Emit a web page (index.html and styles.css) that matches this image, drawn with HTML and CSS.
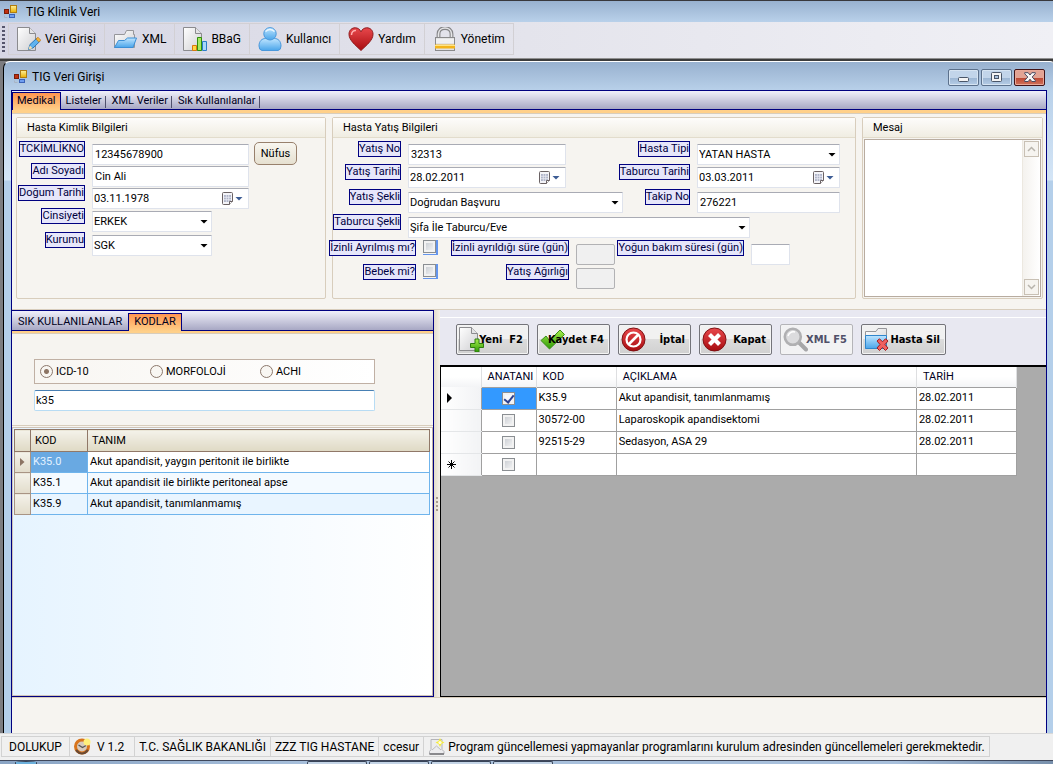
FILE: index.html
```html
<!DOCTYPE html>
<html lang="tr">
<head>
<meta charset="utf-8">
<title>TIG Klinik Veri</title>
<link rel="stylesheet" href="styles.css">
</head>
<body>
<svg class="defs" aria-hidden="true">
  <defs>
    <linearGradient id="paper" x1="0" y1="0" x2="1" y2="1"><stop offset="0" stop-color="#ffffff"/><stop offset="1" stop-color="#cfcfd2"/></linearGradient>
    <linearGradient id="blue" x1="0" y1="0" x2="0" y2="1"><stop offset="0" stop-color="#bfe5ff"/><stop offset="1" stop-color="#4aa5ea"/></linearGradient>
    <linearGradient id="red" x1="0" y1="0" x2="0" y2="1"><stop offset="0" stop-color="#e8484c"/><stop offset="1" stop-color="#a80c10"/></linearGradient>
    <linearGradient id="green" x1="0" y1="0" x2="0" y2="1"><stop offset="0" stop-color="#a6ee4c"/><stop offset="1" stop-color="#2f9a06"/></linearGradient>
    <linearGradient id="gold" x1="0" y1="0" x2="0" y2="1"><stop offset="0" stop-color="#fff09a"/><stop offset="1" stop-color="#eab000"/></linearGradient>
    <symbol id="app" viewBox="0 0 14 14">
      <rect x=".5" y="4.500" width="4" height="4" fill="#c03010" stroke="#7a1c08"/>
      <rect x="6.500" y=".5" width="6" height="7" fill="url(#gold)" stroke="#b07c10"/>
      <rect x="5.500" y="9.500" width="5" height="3" fill="#6f9ef0" stroke="#3a62b8"/>
      <path d="M.5 10.500v2h3" fill="none" stroke="#a8b4c4"/>
    </symbol>
    <symbol id="cal" viewBox="0 0 12 14">
      <path d="M.5 1.500q0-1 1-1h8q1 0 1 1v8l-3 3h-6q-1 0-1-1z" fill="#f4f4f8" stroke="#6a6264"/>
      <path d="M2 3h7v7H2z" fill="#aeb4c8"/>
      <path d="M4.300 3v7M6.700 3v7M2 5.300h7M2 7.700h7" stroke="#e8eaf2" stroke-width=".8"/>
      <path d="M10.500 9.500h-3v3" fill="#fff" stroke="#6a6264"/>
    </symbol>
    <symbol id="page" viewBox="0 0 19 24">
      <path d="M.5.5h12l6 6v17H.5z" fill="url(#paper)" stroke="#8b8b8e"/>
      <path d="M12.500.5v6h6" fill="#e4e4e6" stroke="#8b8b8e"/>
    </symbol>
  </defs>
</svg>

<header class="app-title"><svg class="app-icon"><use href="#app"/></svg><span>TIG Klinik Veri</span></header>

<nav class="toolbar">
  <span class="grip"></span>
  <button class="tool"><svg width="24" height="24" viewBox="0 0 24 24"><use href="#page" width="19" height="24"/><path d="M11.500 22.500l1.500-5 7-6.500 3 3.200-7 6.800z" fill="#5fb2ee" stroke="#2a76b8"/><path d="M19 12l2-1.800 2.800 3-2 1.800z" fill="#f3b53a" stroke="#c07a18" stroke-width=".7"/><path d="M11.500 22.500l1.300-4 2.800 2.700z" fill="#f6dfae"/></svg>Veri Girişi</button>
  <button class="tool"><svg width="25" height="24" viewBox="0 0 25 24"><path d="M1.500 20.500v-13h10l2-4h7v4h1v13z" fill="url(#paper)" stroke="#96969a"/><path d="M1.500 20.500l4-7h6l3-2.500h9l-3.500 9.500z" fill="url(#blue)" stroke="#3b8fd6"/></svg>XML</button>
  <button class="tool"><svg width="24" height="24" viewBox="0 0 24 24"><use href="#page" width="19" height="24"/><path d="M9.500 18.500h4v5h-4z" fill="#ffd740" stroke="#d8780c"/><path d="M14.500 10.500h4v13h-4z" fill="#a5e860" stroke="#2f8d0c"/><path d="M19.500 14.500h4v9h-4z" fill="#a8d8fa" stroke="#2a7cc8"/></svg>BBaG</button>
  <button class="tool"><svg width="24" height="24" viewBox="0 0 24 24"><path d="M1 19c0-5 3-7.500 6.500-7.500h9c3.500 0 6.500 2.500 6.500 7.500q0 4-3 4.500H4Q1 23 1 19z" fill="url(#blue)" stroke="#4a98dc"/><circle cx="12" cy="6.800" r="6.200" fill="url(#blue)" stroke="#4a98dc"/><path d="M7.500 4.500q4.500-4 9 0" stroke="#e8f6ff" fill="none" stroke-width="1.500"/></svg>Kullanıcı</button>
  <button class="tool"><svg width="26" height="24" viewBox="0 0 26 24"><path d="M13 23.500C8 18.500 1 13.500 1 7.200 1 3 4 .8 7.200.8 10 .8 12 2.500 13 4.800 14 2.500 16 .8 18.800.8 22 .8 25 3 25 7.200c0 6.300-7 11.300-12 16.300z" fill="url(#red)" stroke="#8f1a1c"/><path d="M3.500 8c0-3 2-4.800 4.500-4.500" stroke="#ffb0b0" fill="none" stroke-width="1.500"/></svg>Yardım</button>
  <button class="tool"><svg width="24" height="24" viewBox="0 0 24 24"><path d="M5.500 12V7c0-8 13-8 13 0v5" fill="none" stroke="#858588" stroke-width="3.800"/><path d="M5.500 12V7c0-8 13-8 13 0v5" fill="none" stroke="#e6e6e8" stroke-width="1.600"/><rect x="2.500" y="10.500" width="19" height="13" fill="#e2e2e4" stroke="#8a8a8c"/><path d="M3 13h18M3 15h18" stroke="#fff"/><path d="M2 17.500h20v4H2z" fill="#f3b41c"/><path d="M2 18.500h20" stroke="#ffe584"/></svg>Yönetim</button>
</nav>

<main class="mdi">
<section class="child">
  <header class="child-title">
    <svg class="app-icon"><use href="#app"/></svg><span>TIG Veri Girişi</span>
    <div class="win-buttons">
      <button class="wb" aria-label="Simge durumuna küçült"><svg width="12" height="11" viewBox="0 0 12 11"><rect x=".5" y="5.500" width="10" height="4" rx="1" fill="#f4f4f4" stroke="#4a5668"/></svg></button>
      <button class="wb" aria-label="Ekranı kapla"><svg width="12" height="11" viewBox="0 0 12 11"><rect x=".5" y=".5" width="10" height="9" rx="1" fill="#f4f4f4" stroke="#4a5668"/><rect x="3.500" y="3.500" width="4" height="3" fill="#a8c0dc" stroke="#4a5668"/></svg></button>
      <button class="wb close" aria-label="Pencereyi kapat"><svg width="12" height="11" viewBox="0 0 12 11"><path d="M.7.7h3.500L6 3 7.800.7h3.500v1L8.200 5l3.100 3.500v1H7.800L6 7.200 4.200 9.500H.7v-1L3.800 5 .7 1.700z" fill="#f6f6f6" stroke="#4a4a60"/></svg></button>
    </div>
  </header>

  <div class="client">
    <div class="tabs main-tabs" role="tablist">
      <button class="tab active" role="tab">Medikal</button><button class="tab" role="tab">Listeler</button><button class="tab" role="tab">XML Veriler</button><button class="tab" role="tab">Sık Kullanılanlar</button>
    </div>

    <div class="groups">
      <fieldset class="group">
        <div class="group-head">Hasta Kimlik Bilgileri</div>
        <div class="form id-form">
          <label class="lbl" for="tc">TCKİMLİKNO</label><input class="field" id="tc" value="12345678900"><button class="nufus">Nüfus</button>
          <label class="lbl" for="ad">Adı Soyadı</label><input class="field" id="ad" value="Cin Ali">
          <label class="lbl" for="dt">Doğum Tarihi</label><span class="combo date"><input class="field" id="dt" value="03.11.1978"><svg class="cal-icon"><use href="#cal"/></svg><i></i></span>
          <label class="lbl" for="cins">Cinsiyeti</label><span class="combo short"><select class="field" id="cins"><option>ERKEK</option></select><i></i></span>
          <label class="lbl" for="kur">Kurumu</label><span class="combo short"><select class="field" id="kur"><option>SGK</option></select><i></i></span>
        </div>
      </fieldset>

      <fieldset class="group">
        <div class="group-head">Hasta Yatış Bilgileri</div>
        <div class="form stay-form">
          <label class="lbl" for="yno">Yatış No</label><input class="field mid" id="yno" value="32313">
          <label class="lbl" for="tip">Hasta Tipi</label><span class="combo"><select class="field" id="tip"><option>YATAN HASTA</option></select><i></i></span>
          <label class="lbl" for="ytar">Yatış Tarihi</label><span class="combo date mid"><input class="field" id="ytar" value="28.02.2011"><svg class="cal-icon"><use href="#cal"/></svg><i></i></span>
          <label class="lbl" for="ttar">Taburcu Tarihi</label><span class="combo date"><input class="field" id="ttar" value="03.03.2011"><svg class="cal-icon"><use href="#cal"/></svg><i></i></span>
          <label class="lbl" for="ysek">Yatış Şekli</label><span class="combo"><select class="field" id="ysek"><option>Doğrudan Başvuru</option></select><i></i></span>
          <label class="lbl" for="takip">Takip No</label><input class="field" id="takip" value="276221">
          <label class="lbl" for="tsek">Taburcu Şekli</label><span class="combo wide"><select class="field" id="tsek"><option>Şifa İle Taburcu/Eve</option></select><i></i></span>
        </div>
        <div class="form extra-form">
          <label class="lbl" for="izin">İzinli Ayrılmış mı?</label><span class="check-box"><input type="checkbox" id="izin"></span>
          <label class="lbl" for="isure">İzinli ayrıldığı süre (gün)</label><input class="field" id="isure" disabled>
          <label class="lbl" for="ybs">Yoğun bakım süresi (gün)</label><input class="field" id="ybs">
          <label class="lbl" for="bebek">Bebek mi?</label><span class="check-box"><input type="checkbox" id="bebek"></span>
          <label class="lbl" for="agir">Yatış Ağırlığı</label><input class="field" id="agir" disabled>
        </div>
      </fieldset>

      <fieldset class="group message">
        <div class="group-head">Mesaj</div>
        <div class="memo">
          <textarea aria-label="Mesaj"></textarea>
          <div class="scroll">
            <button aria-label="Yukarı"><svg width="9" height="6" viewBox="0 0 9 6"><path d="M1 5l3.500-3.500L8 5" fill="none" stroke="#b8b4ac" stroke-width="1.500"/></svg></button>
            <button aria-label="Aşağı"><svg width="9" height="6" viewBox="0 0 9 6"><path d="M1 1l3.500 3.500L8 1" fill="none" stroke="#b8b4ac" stroke-width="1.500"/></svg></button>
          </div>
        </div>
      </fieldset>
    </div>

    <div class="split">
      <section class="codes">
        <div class="tabs code-tabs" role="tablist">
          <button class="tab" role="tab">SIK KULLANILANLAR</button><button class="tab active" role="tab">KODLAR</button>
        </div>
        <div class="search">
          <div class="radios">
            <label><input type="radio" name="kind" checked>ICD-10</label>
            <label><input type="radio" name="kind">MORFOLOJİ</label>
            <label><input type="radio" name="kind">ACHI</label>
          </div>
          <input class="query" aria-label="Kod ara" value="k35">
        </div>
        <div class="code-grid">
          <table class="code-table">
            <colgroup><col class="c-mark"><col class="c-code"><col></colgroup>
            <thead><tr><th></th><th>KOD</th><th>TANIM</th></tr></thead>
            <tbody>
              <tr><th><svg width="5" height="8" viewBox="0 0 5 8"><path d="M0 0l4.500 4L0 8z" fill="#8c7464"/></svg></th><td class="sel">K35.0</td><td>Akut apandisit, yaygın peritonit ile birlikte</td></tr>
              <tr><th></th><td>K35.1</td><td>Akut apandisit ile birlikte peritoneal apse</td></tr>
              <tr><th></th><td>K35.9</td><td>Akut apandisit, tanımlanmamış</td></tr>
            </tbody>
          </table>
        </div>
      </section>

      <div class="splitter"><i></i></div>

      <section class="records">
        <div class="actions">
          <button class="act"><svg width="25" height="25" viewBox="0 0 25 25"><use href="#page" width="19" height="24"/><path d="M16 12h4v4.500h4.500v4H20V25h-4v-4.500h-4.500v-4H16z" fill="url(#green)" stroke="#2f7d10"/></svg><span>Yeni&nbsp; F2</span></button>
          <button class="act"><svg width="25" height="25" viewBox="0 0 25 25"><path d="M1 13.500l5-4.500 3.500 4.500L20 3l4.500 4.500L9.500 22z" fill="url(#green)" stroke="#3b8d18"/></svg><span>Kaydet F4</span></button>
          <button class="act"><svg width="25" height="25" viewBox="0 0 25 25"><circle cx="12.500" cy="12.500" r="11.500" fill="url(#red)" stroke="#7f1214"/><circle cx="12.500" cy="12.500" r="7" fill="none" stroke="#fff" stroke-width="2.200"/><path d="M7.500 17.500l10-10" stroke="#fff" stroke-width="2.600"/></svg><span>İptal</span></button>
          <button class="act"><svg width="25" height="25" viewBox="0 0 25 25"><circle cx="12.500" cy="12.500" r="11.500" fill="url(#red)" stroke="#7f1214"/><path d="M7.500 7.500l10 10M17.500 7.500l-10 10" stroke="#fff" stroke-width="4.200"/></svg><span>Kapat</span></button>
          <button class="act" disabled><svg width="25" height="25" viewBox="0 0 25 25"><path d="M16 15.500l7 7" stroke="#a6a6a8" stroke-width="4" stroke-linecap="round"/><circle cx="9.800" cy="9.800" r="8" fill="#dcdcde" stroke="#b0b0b2" stroke-width="2.600"/><path d="M5 9q2-5 7-4" fill="none" stroke="#fff" stroke-width="1.500"/></svg><span>XML F5</span></button>
          <button class="act long"><svg width="25" height="25" viewBox="0 0 25 25"><path d="M1.500 21.500v-17H12l2-3h8.500v20z" fill="url(#paper)" stroke="#96969a"/><path d="M1.500 8.500h21v13h-21z" fill="url(#blue)" stroke="#2f86cc"/><path d="M13 14l2.500-2.200 3 3 3-3L24 14l-3 3.500 3 3.500-2.500 2.500-3-3-3 3L13 21l3-3.500z" fill="#f06060" stroke="#a01c20"/></svg><span>Hasta Sil</span></button>
        </div>
        <div class="record-grid">
          <table class="record-table">
            <colgroup><col class="r-mark"><col class="r-main"><col class="r-code"><col class="r-desc"><col class="r-date"></colgroup>
            <thead><tr><th></th><th>ANATANI</th><th>KOD</th><th>AÇIKLAMA</th><th>TARİH</th></tr></thead>
            <tbody>
              <tr><th><svg width="6" height="10" viewBox="0 0 6 10"><path d="M0 0l5 5-5 5z"/></svg></th><td class="sel"><input type="checkbox" aria-label="Ana tanı" checked></td><td>K35.9</td><td>Akut apandisit, tanımlanmamış</td><td>28.02.2011</td></tr>
              <tr><th></th><td><input type="checkbox" aria-label="Ana tanı"></td><td>30572-00</td><td>Laparoskopik apandisektomi</td><td>28.02.2011</td></tr>
              <tr><th></th><td><input type="checkbox" aria-label="Ana tanı"></td><td>92515-29</td><td>Sedasyon, ASA 29</td><td>28.02.2011</td></tr>
              <tr><th><svg width="9" height="9" viewBox="0 0 9 9"><path d="M4.500 0v9M0 4.500h9M1.500 1.500l6 6M7.500 1.500l-6 6" stroke="#000"/></svg></th><td><input type="checkbox" aria-label="Ana tanı"></td><td></td><td></td><td></td></tr>
            </tbody>
          </table>
        </div>
      </section>
    </div>
    <div class="blank"></div>
  </div>
</section>
</main>

<footer class="status">
  <span class="cell">DOLUKUP</span>
  <span class="cell ver"><svg width="17" height="17" viewBox="0 0 17 17"><circle cx="8" cy="8.500" r="6.500" fill="#d8cabc" stroke="#d8741c" stroke-width="3"/><path d="M2 12q6 7 12 0" fill="none" stroke="#6a4a34" stroke-width="2"/><path d="M4.500 7l4 2.500 3.500-2" fill="none" stroke="#555" stroke-width="1.300"/><circle cx="13" cy="4" r="3.500" fill="#fff07a"/></svg>V 1.2</span>
  <span class="cell">T.C. SAĞLIK BAKANLIĞI</span>
  <span class="cell">ZZZ TIG HASTANE</span>
  <span class="cell">ccesur</span>
  <span class="cell news"><svg width="17" height="17" viewBox="0 0 17 17"><path d="M3 1.500h11v10l2 2v2.500H1.500v-2.500l1.500-2z" fill="#ececee" stroke="#b4b4b8"/><path d="M1.500 16h14.500" stroke="#707074" stroke-width="1.500"/><path d="M4 12l4.500-4L13 12" fill="none" stroke="#bcbcc0"/><path d="M12 0l1.500 3 3 1.500-3 1.500L12 9l-1.500-3-3-1.500 3-1.500z" fill="#f6ec40"/><circle cx="12" cy="4.500" r="1.600" fill="#fffde0"/></svg>Program güncellemesi yapmayanlar programlarını kurulum adresinden güncellemeleri gerekmektedir.</span>
</footer>
<div class="taskbar"><span class="orb"></span><span></span><span></span><span></span><span></span></div>
</body>
</html>
```

FILE: styles.css
```css
* { box-sizing: border-box; }
:root {
  --ui: Roboto, "Noto Sans", Tahoma, sans-serif;
  --bold: "DejaVu Sans Condensed", "DejaVu Sans", Tahoma, sans-serif;
  --navy: #000080;
  --tan: #d8cdbc;
}
body {
  margin: 0;
  height: 100vh;
  display: flex;
  flex-direction: column;
  overflow: hidden;
  font: 11px/14px var(--ui);
  color: #000;
  background: #f0f0f0;
}
button, input, select, textarea { font: inherit; color: inherit; margin: 0; border-radius: 0; }
button { padding: 0; border: 0; background: none; }
.defs { position: absolute; width: 0; height: 0; }
.app-icon { width: 14px; height: 14px; flex: none; }
.app-title, .toolbar, .child-title, .status { font-size: 12px; }

.app-title {
  height: 22px;
  padding: 0 4px;
  display: flex;
  align-items: center;
  gap: 8px;
  border-top: 1px solid #38383c;
  background: linear-gradient(#98b1cf, #b9d1ea);
}
.toolbar {
  height: 36px;
  padding: 1px 2px;
  display: flex;
  background: linear-gradient(90deg, #d6d6e4, #e4e4ec 50%, #f0f0f5);
}
.grip { width: 3px; margin: 3px 3px 4px 0; background: repeating-linear-gradient(#55556c 0 2px, transparent 2px 4px); }
.tool {
  height: 32px;
  padding: 0 8px;
  display: flex;
  align-items: center;
  gap: 4px;
  border: 1px solid #d2d0d4;
  border-left-width: 0;
}
.tool:nth-child(2) { border-left-width: 1px; }

.mdi {
  flex: 1;
  min-height: 0;
  display: flex;
  padding: 3px 0 0 3px;
  background: linear-gradient(#909090 0 1px, #3c3c3c 1px 3px, #7c7c80 3px);
  border-bottom: 1px solid #d8d8d8;
}
.child {
  flex: 1;
  display: flex;
  flex-direction: column;
  padding: 0 6px 0 7px;
  border-left: 1px solid #000;
  border-top: 1px solid #fff;
  border-top-left-radius: 7px;
  border-top-right-radius: 3px;
  background: linear-gradient(#98b1cf, #b9d1ea 29px, #d4e5f6 118px, #b4cfea 119px);
}
.child-title {
  height: 28px;
  padding: 2px 2px 0 3px;
  display: flex;
  align-items: center;
  gap: 4px;
}
.win-buttons { margin-left: auto; display: flex; gap: 2px; }
.wb {
  width: 31px;
  height: 17px;
  display: grid;
  place-items: center;
  border: 1px solid #5c718c;
  border-radius: 2px;
  box-shadow: inset 0 0 0 1px #d6e4f2;
  background: linear-gradient(#c2d5ea 50%, #9ab4d2 50%, #b6cde6);
}
.wb.close { border-color: #421418; box-shadow: inset 0 0 0 1px #e8a898; background: linear-gradient(#e2a394 50%, #bb4430 50%, #d0735c); }

.client {
  flex: 1;
  display: flex;
  flex-direction: column;
  border: 1px solid var(--navy);
  border-bottom: 0;
  background: #f6f4f0;
}
.tabs {
  flex: none;
  display: flex;
  align-items: flex-end;
  border-bottom: 1px solid var(--navy);
  background: linear-gradient(#f0f0fa, #a8a8c4);
}
.main-tabs { height: 19px; }
.tab {
  height: 17px;
  padding: 0 4px 1px;
  border: 1px solid transparent;
  border-bottom: 0;
  color: #000020;
  background: linear-gradient(#50506c, #50506c) right 3px / 1px 12px no-repeat;
}
.tab.active {
  height: 18px;
  margin-bottom: -1px;
  border-color: var(--navy);
  background: linear-gradient(#ff9650, #ffcf88);
}

.groups {
  display: grid;
  grid-template-columns: 310fr 524fr 181fr;
  gap: 6px;
  height: 200px;
  padding: 4px 3px 10px 4px;
  border-top: 3px solid #ffd08a;
  border-bottom: 1px solid var(--tan);
  box-shadow: inset 0 1px var(--tan);
  background: #f6f4f0;
}
.group {
  min-width: 0;
  margin: 0;
  padding: 0;
  display: flex;
  flex-direction: column;
  border: 1px solid var(--tan);
  border-radius: 2px;
}
.group-head {
  height: 20px;
  padding: 3px 10px;
  border-bottom: 1px solid #e2dccc;
  background: linear-gradient(#fdfcfb, #f0ede2);
}
.form { display: grid; align-items: start; justify-content: start; }
.id-form { grid-template-columns: 75px 157px 1fr; grid-template-rows: 22px 22px 23px 24px 22px; padding: 3px 0 0; }
.id-form > :nth-child(2) { grid-column: 2; }
.id-form .lbl { grid-column: 1; }
.lbl {
  justify-self: end;
  height: 16px;
  margin-right: 7px;
  line-height: 14px;
  white-space: nowrap;
  border: 1px solid var(--navy);
  color: #000040;
  background: #e6e6fa;
}
.field {
  width: 100%;
  height: 21px;
  padding: 0 2px;
  border: 1px solid #dfe3ec;
  border-top-color: #a9abb4;
  border-radius: 1px;
  background: #fff;
  appearance: none;
}
.field:disabled { border-color: #b2b2b4; border-radius: 2px; background: #f0f0f0; }
.form > .field, .form > .combo { margin-top: 3px; }
.combo { display: grid; grid-template-columns: 1fr 12px 15px; align-items: center; }
.combo .field { grid-area: 1 / 1 / 2 / 4; padding-left: 1px; }
.combo i {
  grid-area: 1 / 3;
  width: 8px;
  height: 4px;
  margin-left: 3px;
  pointer-events: none;
  background: #000;
  clip-path: polygon(0 0, 100% 0, 50% 100%);
}
.combo .cal-icon { grid-area: 1 / 2; width: 12px; height: 14px; }
.date i { margin-left: 1px; background: #3c5c94; }
.short { width: 120px; }
.nufus {
  width: 43px;
  height: 23px;
  margin: 1px 0 0 5px;
  border: 1px solid #98806c;
  border-radius: 5px;
  background: linear-gradient(#f8f6f0, #e6e0d0);
}
.stay-form { grid-template-columns: 75px 215px 74px 143px; grid-template-rows: 23px 25px 25px 26px; padding-top: 3px; }
.stay-form .wide { grid-column: 2 / 5; width: 342px; }
.mid { width: 158px; }
.extra-form { grid-template-columns: 90px 30px 123px 46px 129px 39px; grid-template-rows: 24px 24px; }
.extra-form .field { width: 39px; margin-top: 4px; }
.check-box { width: 15px; height: 15px; display: flex; border-right: 2px solid #6495ed; border-bottom: 1px solid #6495ed; }
.check-box input, .record-table input {
  width: 13px;
  height: 13px;
  appearance: none;
  border: 1px solid #8a8e92;
  background: linear-gradient(135deg, #c4c8ce, #fafafa);
  box-shadow: inset 0 0 0 2px #f2f2f2;
}
.memo { flex: 1; min-height: 0; display: flex; margin: 1px; border: 1px solid #b8aca0; background: #fff; }
.memo textarea { flex: 1; min-width: 0; border: 0; resize: none; background: #fff; }
.scroll { width: 18px; padding: 1px; display: flex; flex-direction: column; justify-content: space-between; border-left: 1px solid #ece8e0; background: linear-gradient(90deg, #f4f2ee, #fff); }
.scroll button { height: 16px; display: grid; place-items: center; border: 1px solid #c8c0b4; background: #f6f4f0; }

.split { flex: 1; min-height: 0; display: grid; grid-template-columns: 422fr 6px 606fr; }
.codes { min-width: 0; display: flex; flex-direction: column; border: 1px solid var(--navy); border-left: 0; }
.code-tabs { height: 20px; }
.code-tabs .tab { padding: 0 5px 1px; background: none; }
.code-tabs .tab.active { background: linear-gradient(#ff9650, #ffcf88); }
.search {
  display: grid;
  gap: 6px;
  padding: 26px 58px 14px 22px;
  border-top: 2px solid #ffd08a;
  border-bottom: 1px solid var(--tan);
  box-shadow: inset 0 1px var(--tan);
}
.radios { height: 25px; padding-left: 5px; display: flex; align-items: center; border: 1px solid #c0b0a4; background: linear-gradient(90deg, #f8f6f2, #fff); }
.radios label { width: 110px; display: flex; align-items: center; gap: 3px; }
.radios input { width: 13px; height: 13px; appearance: none; border: 1px solid #8c786c; border-radius: 50%; background: #f8f6f2; }
.radios input:checked { background: radial-gradient(circle, #8c7464 0 2px, #f8f6f2 3px); }
.query { width: 100%; height: 21px; padding: 0 1px; border: 1px solid #b8dcf4; border-top-color: #4880b4; border-radius: 2px; background: #fff; }
.code-grid { flex: 1; margin-top: 1px; padding: 1px 2px 0 1px; border: 1px solid #d0c4b8; border-right-color: #c0b0a4; background: linear-gradient(90deg, #e6f4ff, #fff); }
table { border-collapse: collapse; table-layout: fixed; }
th { font-weight: normal; text-align: left; padding: 0; }
td { padding: 0; white-space: nowrap; }
.code-table { width: 100%; }
.c-mark { width: 16px; }
.c-code { width: 57px; }
.code-table thead th { height: 22px; padding-left: 4px; border: 1px solid #907868; background: linear-gradient(#f4f2ea, #dfd9c4); }
.code-table tbody th { padding-left: 5px; border: 1px solid #a89484; background: linear-gradient(#f4f2ea, #e2dccb); }
.code-table tbody th svg { display: block; }
.code-table tbody td { height: 21px; padding: 0 2px; border: 1px solid #6fb4ec; background: #f4faff; }
.code-table tbody tr:first-child td { background: #fff; }
.code-table tbody tr:last-child td { background: #e9f5ff; }
.code-table tbody tr:first-child td.sel { color: #e4f2ff; background: #69a9e2; }
.splitter { display: grid; place-items: center; background: linear-gradient(90deg, #e4dccc, #f4f1ea); }
.splitter i { width: 2px; height: 14px; background: repeating-linear-gradient(#a89c90 0 2px, transparent 2px 4px); }
.records { min-width: 0; display: flex; flex-direction: column; }
.actions { height: 55px; display: flex; align-items: flex-start; gap: 8px; padding: 14px 16px 0; background: linear-gradient(transparent 7px, #fff 7px 8px, transparent 8px), #e8e8f1; }
.act {
  width: 73px;
  height: 31px;
  padding: 0 5px 0 2px;
  display: flex;
  flex: none;
  align-items: center;
  justify-content: space-between;
  border: 1px solid #74747a;
  border-radius: 2px;
  box-shadow: inset 0 0 0 1px #f4f4f4;
  background: linear-gradient(#f1f1f1 50%, #dcdcdc 50%, #d0d0d0);
  font-family: var(--bold);
  font-weight: bold;
  white-space: nowrap;
}
.act svg { flex: none; }
.act span { position: relative; margin-left: -18px; }
.act.long { width: 85px; }
.act:disabled { color: #505068; border-color: #b4b4b8; background: #f2f2f3; }
.record-grid { flex: 1; border: 1px solid #000; border-top-width: 2px; border-right: 0; background: #ababab; }
.record-table { width: 576px; background: #fff; }
.r-mark { width: 40px; }
.r-main { width: 55px; }
.r-code { width: 80px; }
.r-desc { width: 300px; }
.r-date { width: 100px; }
.record-table thead th { height: 20px; padding-left: 6px; background: linear-gradient(#fff 50%, #f3f4f6); border-right: 1px solid #dedfe1; color: #000020; }
.record-table tbody th { padding-left: 6px; background: linear-gradient(90deg, #fff, #f2f3f5); border-bottom: 1px solid #e4e6e8; }
.record-table tbody th svg { display: block; }
.record-table td { height: 22px; padding: 0 2px; border: 1px solid #a0a0a0; }
.record-table td:nth-child(2) { text-align: center; }
.record-table td.sel { background: #3399ff; }
.record-table input { display: block; margin: 0 auto; }
.record-table input:checked { background: #f6f8fc; display: grid; place-items: center; }
.record-table input:checked::after { content: ""; width: 4px; height: 8px; border: solid #2c4090; border-width: 0 2px 2px 0; transform: rotate(38deg); }
.blank { height: 36px; border-top: 1px solid var(--tan); background: #f6f4f0; }

.status { height: 26px; padding: 2px 1px; display: flex; background: #f0f0f0; }
.cell { padding: 0 4px; height: 21px; display: flex; align-items: center; white-space: nowrap; border: 1px solid #d2d2d2; border-left-width: 0; }
.cell:first-child { padding: 0 7px; border-left-width: 1px; }
.cell.ver { gap: 6px; padding-right: 10px; }
.cell.news { gap: 3px; }
.taskbar { height: 4px; padding-left: 15px; display: flex; gap: 2px; border-top: 1px solid #40485c; background: linear-gradient(90deg, #8aa4c4, #a8c0dc 30% 85%, #7890ac); }
.taskbar span { width: 60px; border: 1px solid #384458; border-bottom: 0; border-radius: 2px 2px 0 0; background: #c4d4e6; }
.taskbar .orb { width: 22px; margin-right: 268px; border-radius: 50% 50% 0 0; background: #6cb0dc; }
```
